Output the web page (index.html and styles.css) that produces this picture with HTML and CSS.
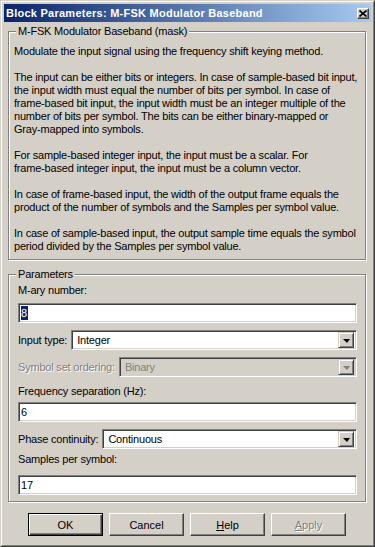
FILE: index.html
```html
<!DOCTYPE html>
<html lang="en">
<head>
    <meta charset="UTF-8">
    <meta name="viewport" content="width=device-width, initial-scale=1.0">
    <title>Block Parameters: M-FSK Modulator Baseband</title>
    <link rel="stylesheet" href="styles.css">
</head>
<body>

    <div class="window">
        <div class="frame">
            <div class="titlebar">
                <span class="title">Block Parameters: M-FSK Modulator Baseband</span>
                <span class="close-btn">
                    <svg width="8" height="7" viewBox="0 0 8 7">
                        <path d="M0.5 0.5 L7.5 6.5 M7.5 0.5 L0.5 6.5" stroke="#000" stroke-width="1.6" fill="none"/>
                    </svg>
                </span>
            </div>

            <div class="content">
                <!-- Mask description -->
                <fieldset class="group group-desc">
                    <legend>M-FSK Modulator Baseband (mask)</legend>
                    <p>Modulate the input signal using the frequency shift keying method.</p>
                    <p>The input can be either bits or integers. In case of sample-based bit input,<br>
                    the input width must equal the number of bits per symbol. In case of<br>
                    frame-based bit input, the input width must be an integer multiple of the<br>
                    number of bits per symbol. The bits can be either binary-mapped or<br>
                    Gray-mapped into symbols.</p>
                    <p>For sample-based integer input, the input must be a scalar. For<br>
                    frame-based integer input, the input must be a column vector.</p>
                    <p>In case of frame-based input, the width of the output frame equals the<br>
                    product of the number of symbols and the Samples per symbol value.</p>
                    <p>In case of sample-based input, the output sample time equals the symbol<br>
                    period divided by the Samples per symbol value.</p>
                </fieldset>

                <!-- Parameters -->
                <fieldset class="group group-params">
                    <legend>Parameters</legend>

                    <div class="label label-mary">M-ary number:</div>
                    <div class="edit edit-mary"><span class="selected">8</span></div>

                    <div class="row row-input">
                        <span class="row-label">Input type:</span>
                        <div class="combo">
                            <span class="combo-text">Integer</span>
                            <span class="drop"><span class="arrow"></span></span>
                        </div>
                    </div>

                    <div class="row row-symbol disabled">
                        <span class="row-label">Symbol set ordering:</span>
                        <div class="combo">
                            <span class="combo-text">Binary</span>
                            <span class="drop"><span class="arrow"></span></span>
                        </div>
                    </div>

                    <div class="label label-freq">Frequency separation (Hz):</div>
                    <div class="edit edit-freq">6</div>

                    <div class="row row-phase">
                        <span class="row-label">Phase continuity:</span>
                        <div class="combo">
                            <span class="combo-text">Continuous</span>
                            <span class="drop"><span class="arrow"></span></span>
                        </div>
                    </div>

                    <div class="label label-samples">Samples per symbol:</div>
                    <div class="edit edit-samples">17</div>
                </fieldset>

                <div class="buttons">
                    <button class="btn btn-default">OK</button>
                    <button class="btn">Cancel</button>
                    <button class="btn"><u>H</u>elp</button>
                    <button class="btn btn-disabled"><u>A</u>pply</button>
                </div>
            </div>
        </div>
    </div>

</body>
</html>
```

FILE: styles.css
```css
* {
    box-sizing: border-box;
}

body {
    margin: 0;
    background-color: #d4d0c8;
    font-family: "Liberation Sans", Arial, sans-serif;
    font-size: 11px;
    letter-spacing: -0.2px;
    color: #000;
}

.window {
    width: 375px;
    height: 547px;
    border: 1px solid;
    border-color: #d4d0c8 #404040 #404040 #d4d0c8;
}

.frame {
    height: 100%;
    border: 1px solid;
    border-color: #fff #808080 #808080 #fff;
    padding: 2px;
    display: flex;
    flex-direction: column;
}

/* title bar */
.titlebar {
    height: 18px;
    display: flex;
    align-items: center;
    justify-content: space-between;
    padding: 0 2px 0 2px;
    background: linear-gradient(to right, #0a246a, #a6caf0);
}

.title {
    color: white;
    font-weight: bold;
    font-size: 11px;
    letter-spacing: 0.25px;
    white-space: nowrap;
}

.close-btn {
    width: 12px;
    height: 11px;
    display: flex;
    align-items: center;
    justify-content: center;
    background: #d4d0c8;
    border: 1px solid;
    border-color: #fff #404040 #404040 #fff;
    box-shadow: inset -1px -1px #808080;
}

.content {
    flex: 1;
    padding: 3px 5px 0 4px;
}

/* group boxes */
.group {
    margin: 0;
    width: 358px;
    border: 1px solid #808080;
    box-shadow: 1px 1px 0 #fff, inset 1px 1px 0 #fff;
    min-width: 0;
}

.group legend {
    padding: 0 2px;
    line-height: 13px;
    background: #d4d0c8;
}

.group-desc {
    padding: 0 5px 6px 5px;
}

.group-desc legend {
    margin-left: 2px;
}

.group-desc p {
    margin: 0 0 13px;
    line-height: 13px;
    white-space: nowrap;
}

.group-desc p:first-of-type {
    margin-top: 7px;
}

.group-desc p:last-of-type {
    margin-bottom: 0;
}

.group-params {
    margin-top: 8px;
    padding: 0 8px 6px 9px;
}

.group-params legend {
    margin-left: -2px;
}

.label {
    line-height: 13px;
}

.label-mary { margin-top: 3px; }
.label-freq { margin-top: 8px; }
.label-samples { margin-top: 4px; }

/* sunken edit box */
.edit,
.combo {
    height: 20px;
    background: white;
    border: 1px solid;
    border-color: #808080 #fff #fff #808080;
    box-shadow: inset 1px 1px #404040, inset -1px -1px #d4d0c8;
}

.edit {
    padding: 1px 2px;
    line-height: 16px;
}

.edit-mary { margin-top: 6px; }
.edit-freq { margin-top: 4px; }
.edit-samples { margin-top: 9px; }

.selected {
    display: inline-block;
    background: #0a246a;
    color: white;
    line-height: 14px;
    padding: 0 1px 0 0;
}

/* label + combo rows */
.row {
    display: flex;
    align-items: center;
    gap: 4px;
}

.row-label {
    white-space: nowrap;
    line-height: 13px;
}

.row-input { margin-top: 7px; }
.row-symbol { margin-top: 7px; }
.row-phase { margin-top: 7px; }

.combo {
    flex: 1;
    display: flex;
    align-items: center;
    padding: 2px;
}

.combo-text {
    flex: 1;
    padding-left: 3px;
}

.drop {
    width: 16px;
    height: 16px;
    display: flex;
    align-items: center;
    justify-content: center;
    background: #d4d0c8;
    border: 1px solid;
    border-color: #d4d0c8 #404040 #404040 #d4d0c8;
    box-shadow: inset 1px 1px #fff, inset -1px -1px #808080;
}

.arrow {
    width: 0;
    height: 0;
    border-left: 4px solid transparent;
    border-right: 3px solid transparent;
    border-top: 4px solid #000;
    margin-top: 1px;
}

.disabled .row-label {
    color: #808080;
    text-shadow: 1px 1px 0 #fff;
}

.disabled .combo {
    background: #d4d0c8;
}

.disabled .combo-text {
    color: #808080;
}

.disabled .arrow {
    border-top-color: #808080;
}

/* dialog buttons */
.buttons {
    display: flex;
    justify-content: center;
    gap: 6px;
    margin-top: 11px;
}

.btn {
    width: 75px;
    height: 23px;
    padding: 0;
    font-family: inherit;
    font-size: 11px;
    color: #000;
    background: #d4d0c8;
    border: 1px solid;
    border-color: #fff #404040 #404040 #fff;
    box-shadow: inset -1px -1px #808080;
}

.btn-default {
    border-color: #000;
    box-shadow: inset 1px 1px #fff, inset -1px -1px #404040, inset -2px -2px #808080;
}

.btn-disabled {
    color: #808080;
    text-shadow: 1px 1px 0 #fff;
}
```
